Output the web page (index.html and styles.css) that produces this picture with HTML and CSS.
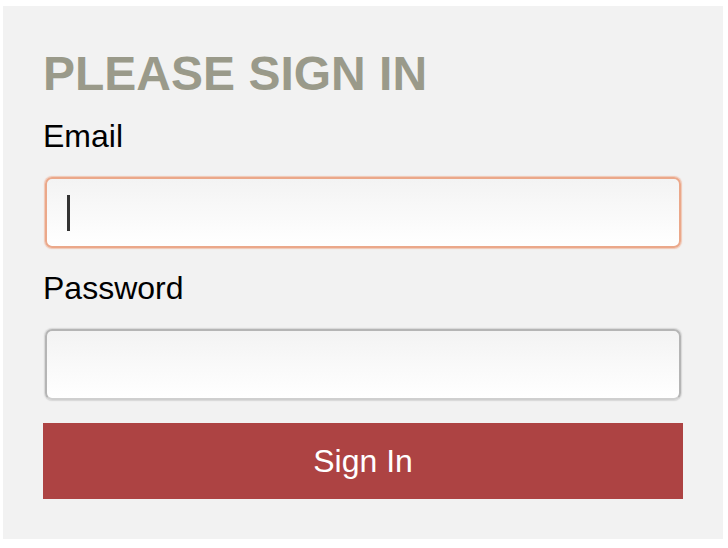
FILE: index.html
```html
<!DOCTYPE html>
<html>
<head>
<meta charset="utf-8">
<link rel="stylesheet" href="styles.css">
</head>
<body>
<form class="panel">
  <h1 class="title">PLEASE SIGN IN</h1>
  <label class="label" for="email">Email</label>
  <div class="field">
    <input class="input input-focus" id="email" type="text">
    <span class="caret"></span>
  </div>
  <label class="label" for="password">Password</label>
  <div class="field">
    <input class="input" id="password" type="password">
  </div>
  <button class="btn" type="button">Sign In</button>
</form>
</body>
</html>
```
FILE: styles.css
```css
html, body {
  margin: 0;
  background: #ffffff;
}
body {
  padding: 6px 5px 0 3px;
  font-family: "Liberation Sans", Arial, sans-serif;
}
.panel {
  background: #f2f2f2;
  padding: 40px;
  display: flex;
  flex-direction: column;
  width: 640px;
}
.title {
  margin: 0 0 17px 0;
  font-size: 48px;
  font-weight: bold;
  color: #9a9a8a;
  line-height: normal;
}
.label {
  font-size: 32px;
  color: #000;
  line-height: normal;
  margin-bottom: 22px;
}
.field {
  position: relative;
  margin-bottom: 22px;
}
.input {
  display: block;
  box-sizing: border-box;
  width: 636px;
  height: 71px;
  margin: 0 2px;
  border: 2px solid #b5b5b5;
  border-bottom-color: #cfcfcf;
  border-radius: 7px;
  background: linear-gradient(#f3f3f3, #ffffff);
  outline: none;
  font-size: 32px;
  font-family: inherit;
  padding: 0 20px;
  box-shadow: 0 0 1px 1px rgba(190,190,190,0.5);
}
.input-focus {
  border-color: #eba88a;
  box-shadow: 0 0 1px 1px rgba(240,170,140,0.6);
}
.caret {
  position: absolute;
  left: 24px;
  top: 18px;
  width: 3px;
  height: 36px;
  background: #333;
}
.btn {
  margin-top: 1px;
  height: 76px;
  border: none;
  background: #ad4343;
  color: #ffffff;
  font-family: inherit;
  font-size: 32px;
  padding: 0;
}
```
